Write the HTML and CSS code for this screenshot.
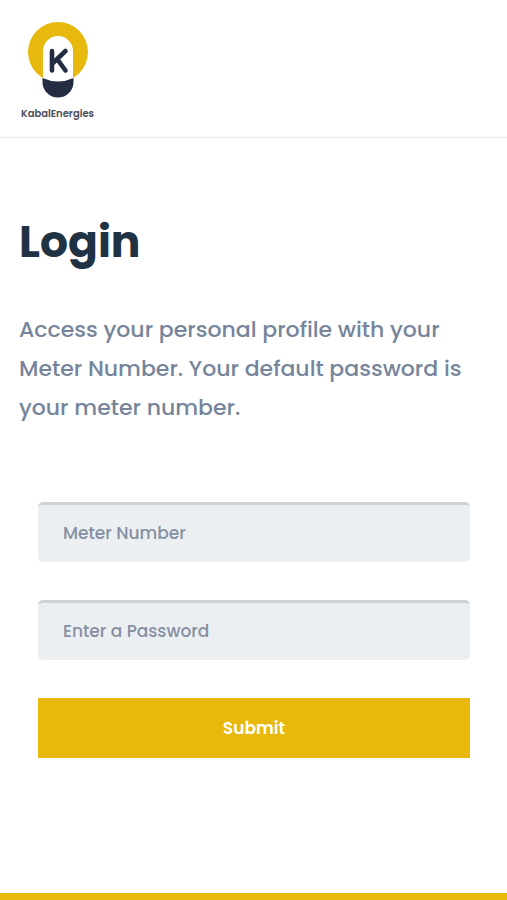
FILE: index.html
```html
<!DOCTYPE html>
<html lang="en">
<head>
<meta charset="utf-8">
<meta name="viewport" content="width=device-width, initial-scale=1">
<title>Login - KabalEnergies</title>
<link rel="stylesheet" href="styles.css">
</head>
<body>
<header class="site-header">
  <a class="brand" href="#">
    <svg class="brand-mark" viewBox="0 0 60 76" aria-hidden="true">
      <circle cx="30" cy="30" r="30" fill="#e7b90f"/>
      <path d="M15 62V29a15 15 0 0 1 30 0v33z" fill="#fff"/>
      <path d="M14.500 56Q30 63 45.500 56v4a15.500 15.500 0 0 1-31 0z" fill="#242c42"/>
      <path d="M24 29V48.500M37.500 29L25 41M29.500 37.500L37.500 48.500" fill="none" stroke="#242c42" stroke-width="4.600" stroke-linecap="round"/>
    </svg>
    <span class="brand-name">KabalEnergies</span>
  </a>
</header>
<main class="login">
  <h1 class="login-title">Login</h1>
  <p class="login-intro">Access your personal profile with your Meter Number. Your default password is your meter number.</p>
  <form class="login-form">
    <input class="field" type="text" name="meter" placeholder="Meter Number" aria-label="Meter Number">
    <input class="field" type="password" name="password" placeholder="Enter a Password" aria-label="Enter a Password">
    <button class="submit" type="submit">Submit</button>
  </form>
</main>
<footer class="site-footer"></footer>
</body>
</html>
```
FILE: styles.css
```css
* {
  box-sizing: border-box;
}

body {
  display: flex;
  flex-direction: column;
  min-height: 100vh;
  margin: 0;
  background: #fff;
  color: #1f3345;
  font-family: Poppins, Inter, "Open Sans", sans-serif;
}

.site-header {
  display: flex;
  padding: 22px 21px 16px;
  border-bottom: 1px solid #ececec;
}

.brand {
  display: flex;
  flex-direction: column;
  align-items: center;
  gap: 8px;
  color: #4a4d58;
  text-decoration: none;
}

.brand-mark {
  display: block;
  width: 60px;
  height: 76px;
}

.brand-name {
  font-size: 10px;
  font-weight: 600;
  line-height: 15px;
}

.login {
  flex: 1;
  padding: 72px 19px 134px;
}

.login-title {
  margin: 0 0 36px;
  font-size: 44px;
  font-weight: 700;
  line-height: 64px;
}

.login-intro {
  margin: 0 0 75px;
  color: #76859b;
  font-size: 22px;
  font-weight: 500;
  line-height: 39px;
}

.login-form {
  display: flex;
  flex-direction: column;
  gap: 38px;
  padding: 0 18px 0 19px;
}

.field {
  width: 100%;
  height: 60px;
  padding: 0 25px 2px;
  border: 0;
  border-top: 3px solid #ced2d5;
  border-radius: 5px;
  background: #ebeff2;
  color: #1f3345;
  font: inherit;
  font-size: 17px;
  font-weight: 500;
}

.field::placeholder {
  color: #858fa3;
  opacity: 1;
}

.submit {
  height: 60px;
  border: 0;
  background: #e9b80c;
  color: #fff;
  font: inherit;
  font-size: 17px;
  font-weight: 600;
}

.site-footer {
  height: 7px;
  background: #e9b80c;
}
```
